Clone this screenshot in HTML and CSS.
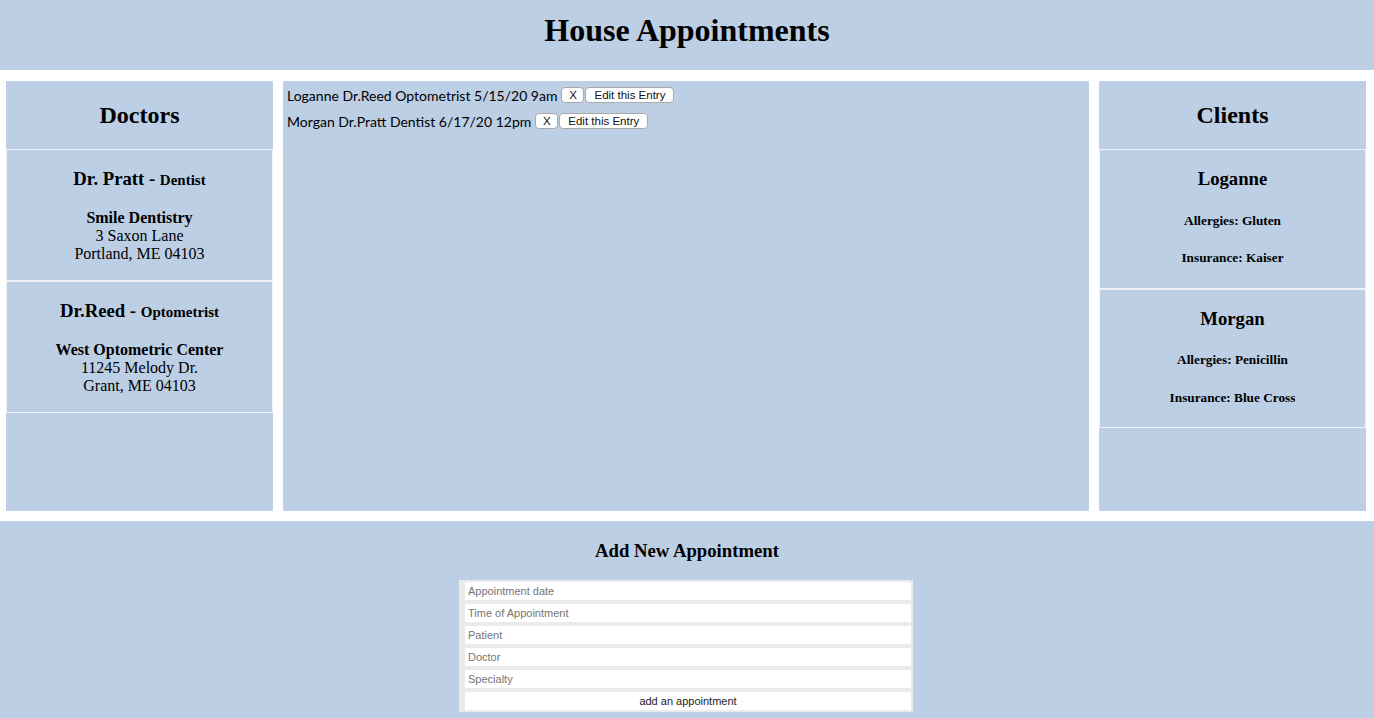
FILE: index.html
```html
<!DOCTYPE html>
<html>
<head>
<meta charset="utf-8">
<title>House Appointments</title>
<link rel="stylesheet" href="styles.css">
</head>
<body>
<header class="top">
  <h1 class="title">House Appointments</h1>
</header>
<main class="columns">
  <section class="side">
    <div class="side-head"><h2>Doctors</h2></div>
    <div class="card">
      <h3 class="card-title">Dr. Pratt - <span class="spec">Dentist</span></h3>
      <p class="addr"><b>Smile Dentistry</b><br>3 Saxon Lane<br>Portland, ME 04103</p>
    </div>
    <div class="card">
      <h3 class="card-title">Dr.Reed - <span class="spec">Optometrist</span></h3>
      <p class="addr"><b>West Optometric Center</b><br>11245 Melody Dr.<br>Grant, ME 04103</p>
    </div>
  </section>
  <section class="middle">
    <div class="entry"><span class="entry-text">Loganne Dr.Reed Optometrist 5/15/20 9am</span><button class="btn btn-x">X</button><button class="btn">Edit this Entry</button></div>
    <div class="entry"><span class="entry-text">Morgan Dr.Pratt Dentist 6/17/20 12pm</span><button class="btn btn-x">X</button><button class="btn">Edit this Entry</button></div>
  </section>
  <section class="side">
    <div class="side-head"><h2>Clients</h2></div>
    <div class="card">
      <h3 class="card-title">Loganne</h3>
      <h5 class="info">Allergies: Gluten</h5>
      <h5 class="info">Insurance: Kaiser</h5>
    </div>
    <div class="card">
      <h3 class="card-title">Morgan</h3>
      <h5 class="info">Allergies: Penicillin</h5>
      <h5 class="info">Insurance: Blue Cross</h5>
    </div>
  </section>
</main>
<section class="bottom">
  <h3 class="form-title">Add New Appointment</h3>
  <form class="form">
    <input class="field" type="text" placeholder="Appointment date">
    <input class="field" type="text" placeholder="Time of Appointment">
    <input class="field" type="text" placeholder="Patient">
    <input class="field" type="text" placeholder="Doctor">
    <input class="field" type="text" placeholder="Specialty">
    <button class="submit" type="button">add an appointment</button>
  </form>
</section>
</body>
</html>
```
FILE: styles.css
```css
html, body {
  margin: 0;
  padding: 0;
  background: #ffffff;
  font-family: "Liberation Serif", "Times New Roman", serif;
  color: #000;
}
.top {
  height: 70px;
  background: #bccfe5;
  box-sizing: border-box;
  padding-top: 12px;
  text-align: center;
}
.title {
  margin: 0;
  font-size: 32px;
  line-height: 37px;
  font-weight: bold;
}
.columns {
  display: flex;
  gap: 10px;
  padding: 11px 0 0 6px;
  height: 430px;
  box-sizing: content-box;
}
.side {
  width: 267px;
  height: 430px;
  background: #bccfe5;
  display: flex;
  flex-direction: column;
}
.side-head {
  height: 68px;
  display: flex;
  align-items: center;
  justify-content: center;
}
.side-head h2 {
  margin: 0;
  font-size: 24px;
  line-height: 28px;
  font-weight: bold;
}
.card {
  border: 1px solid #eef2f7;
  text-align: center;
  display: flow-root;
}
.card-title {
  margin: 18px 0 18px;
  font-size: 18.72px;
  line-height: 22px;
  font-weight: bold;
}
.spec {
  font-size: 15px;
}
.addr {
  margin: 0 0 17px;
  font-size: 16px;
  line-height: 18px;
}
.info {
  margin: 22.5px 0;
  font-size: 13.28px;
  line-height: 15px;
  font-weight: bold;
}
.middle {
  width: 806px;
  height: 430px;
  background: #bccfe5;
  box-sizing: border-box;
  padding: 6px 4px;
  display: flex;
  flex-direction: column;
  gap: 10px;
}
.entry {
  display: flex;
  align-items: center;
  height: 16px;
  font-family: "Lato", "Open Sans", sans-serif;
  font-size: 14px;
}
.entry-text {
  margin-right: 4px;
}
.btn {
  font-family: "Liberation Sans", Arial, sans-serif;
  font-size: 11.5px;
  height: 16px;
  line-height: 14px;
  padding: 0 8px;
  margin: 0 1px 0 0;
  background: #ffffff;
  border: 1px solid #a9a9a9;
  border-radius: 4px;
  color: #111;
}
.btn-x {
  width: 23px;
  padding: 0;
}
.bottom {
  margin-top: 10px;
  background: #bccfe5;
  height: 197px;
  display: flow-root;
}
.form-title {
  margin: 18.72px 0;
  text-align: center;
  font-size: 18.72px;
  line-height: 22px;
  font-weight: bold;
}
.form {
  width: 454px;
  margin: 0 auto;
  box-sizing: border-box;
  background: #ebebeb;
  padding: 2px 2px 2px 6px;
  display: flex;
  flex-direction: column;
  gap: 4px;
  position: relative;
  left: -1px;
}
.field {
  height: 18px;
  box-sizing: border-box;
  border: none;
  margin: 0;
  padding: 0 3px;
  background: #fff;
  font-family: "Liberation Sans", Arial, sans-serif;
  font-size: 11px;
  outline: none;
}
.field::placeholder {
  color: #757575;
}
.submit {
  height: 18px;
  border: none;
  margin: 0;
  padding: 0;
  background: #fff;
  font-family: "Liberation Sans", Arial, sans-serif;
  font-size: 11px;
  color: #222;
}
```
